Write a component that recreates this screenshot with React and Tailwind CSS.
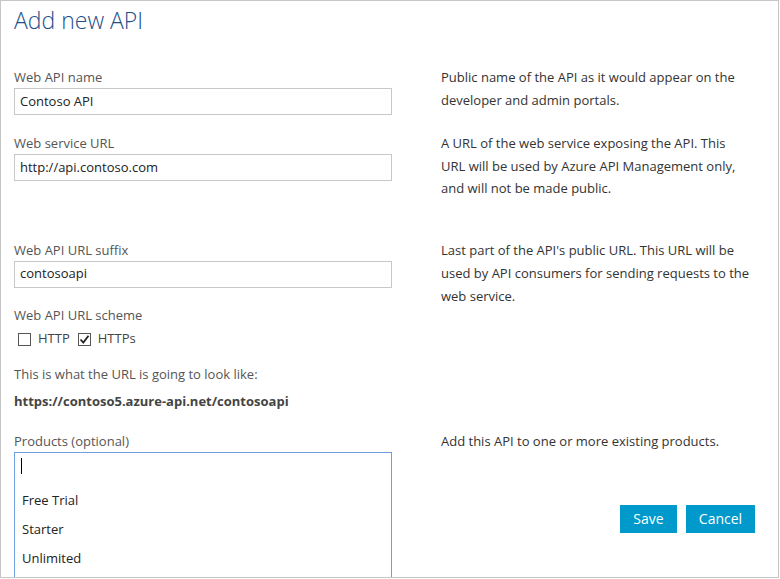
import React from "react";

const font = { fontFamily: '"Open Sans", "Noto Sans", Arial, sans-serif' };

const Checkbox = ({ checked, label }) => (
  <label className="flex items-center gap-[7px]">
    <span className="w-[13px] h-[13px] border border-[#555] bg-white flex items-center justify-center">
      {checked && (
        <svg width="11" height="11" viewBox="0 0 11 11">
          <path d="M1.5 5.5 L4.3 8.5 L9.5 1.8" fill="none" stroke="#222" strokeWidth="1.8" />
        </svg>
      )}
    </span>
    <span>{label}</span>
  </label>
);

const Field = ({ label, value }) => (
  <div className="flex flex-col">
    <div className="leading-[22px] text-[#555]">{label}</div>
    <div className="h-[27px] border border-[#c8c8c8] px-[5px] flex items-center text-[#222]">{value}</div>
  </div>
);

export default function App() {
  return (
    <div className="w-[780px] h-[579px] bg-white">
      <div
        className="w-[779px] h-[578px] border border-[#c6c6c6] overflow-hidden pl-[13px] pt-[3px] text-[13px] text-[#333]"
        style={font}
      >
        <h1 className="text-[23px] leading-[32px] font-light text-[#1d4f8b]">Add new API</h1>

        <div className="grid grid-cols-[378px_1fr] gap-x-[49px] mt-[30px]">
          <Field label="Web API name" value="Contoso API" />
          <p className="leading-[23px] whitespace-nowrap">
            Public name of the API as it would appear on the
            <br />
            developer and admin portals.
          </p>
        </div>

        <div className="grid grid-cols-[378px_1fr] gap-x-[49px] mt-[17px]">
          <Field label="Web service URL" value="http://api.contoso.com" />
          <p className="leading-[22.5px] whitespace-nowrap">
            A URL of the web service exposing the API. This
            <br />
            URL will be used by Azure API Management only,
            <br />
            and will not be made public.
          </p>
        </div>

        <div className="grid grid-cols-[378px_1fr] gap-x-[49px] mt-[39px]">
          <Field label="Web API URL suffix" value="contosoapi" />
          <p className="leading-[23px] whitespace-nowrap">
            Last part of the API's public URL. This URL will be
            <br />
            used by API consumers for sending requests to the
            <br />
            web service.
          </p>
        </div>

        <div className="mt-[-4px] leading-[22px] text-[#555]">Web API URL scheme</div>
        <div className="flex items-center gap-[8px] h-[27px] pl-[4px] text-[#444]">
          <Checkbox label="HTTP" />
          <Checkbox checked label="HTTPs" />
        </div>

        <div className="mt-[10px] leading-[22px] text-[#555]">This is what the URL is going to look like:</div>
        <div className="mt-[5px] leading-[22px] font-bold text-[#444]">https://contoso5.azure-api.net/contosoapi</div>

        <div className="grid grid-cols-[378px_1fr] gap-x-[49px] mt-[18px]">
          <div className="flex flex-col">
            <div className="leading-[22px] text-[#555]">Products (optional)</div>
            <div className="h-[126px] border border-[#6d9fe0] text-[#222]">
              <div className="h-[33px] pl-[6px] pt-[5px]">
                <div className="w-px h-[16px] bg-black" />
              </div>
              <div className="flex flex-col pl-[7px]">
                <div className="leading-[29px]">Free Trial</div>
                <div className="leading-[29px]">Starter</div>
                <div className="leading-[29px]">Unlimited</div>
              </div>
            </div>
          </div>
          <div className="flex flex-col">
            <p className="leading-[22px] whitespace-nowrap">Add this API to one or more existing products.</p>
            <div className="flex gap-[9px] mt-[53px] ml-[179px]">
              <button className="h-[28px] w-[57px] bg-[#0099cc] text-white text-[14px]">Save</button>
              <button className="h-[28px] w-[69px] bg-[#0099cc] text-white text-[14px]">Cancel</button>
            </div>
          </div>
        </div>
      </div>
    </div>
  );
}
